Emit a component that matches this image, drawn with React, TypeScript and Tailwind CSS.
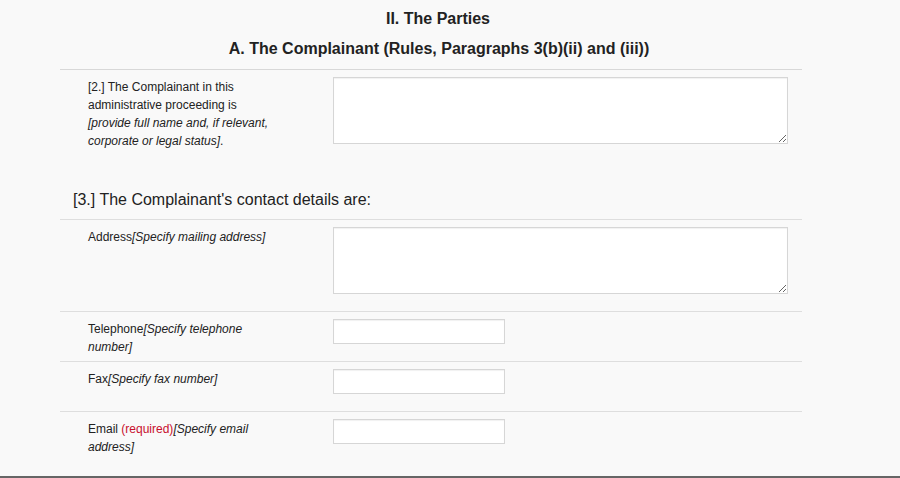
const labelCls = "w-[273px] shrink-0 pl-[28px] pr-[57px] pt-[1px] text-[12px] leading-[18px] text-[#222]";

function Row({ label, children, first }: { label: React.ReactNode; children: React.ReactNode; first?: boolean }) {
  return (
    <div className={`flex pt-[7px] ${first ? "" : "border-t border-[#dedede]"}`}>
      <div className={labelCls}>{label}</div>
      <div className="flex-1 pb-[17px]">{children}</div>
    </div>
  );
}

function Area() {
  return <textarea className="block w-[455px] h-[67px] bg-white border border-[#d6d6d6] shadow-[inset_0_1px_1px_rgba(0,0,0,0.06)]" />;
}

function Field() {
  return <input type="text" className="block w-[172px] h-[25px] bg-white border border-[#d6d6d6] shadow-[inset_0_1px_1px_rgba(0,0,0,0.06)]" />;
}

export default function App() {
  return (
    <div className="w-[900px] h-[478px] bg-[#f9f9f9] flex flex-col font-['Liberation_Sans',Arial,sans-serif] text-[#222] overflow-hidden">
      <div className="ml-[60px] w-[742px] flex-1">
        <h2 className="text-center font-bold text-[16px] leading-[20px] pt-[9px] pl-[14px]">II. The Parties</h2>
        <h3 className="text-center font-bold text-[16px] leading-[22px] mt-[9px] pl-[16px]">
          A. The Complainant (Rules, Paragraphs 3(b)(ii) and (iii))
        </h3>
        <div className="border-t border-[#d8d8d8] mt-[9px]">
          <Row first label={<>[2.] The Complainant in this administrative proceeding is <i>[provide full name and, if relevant, corporate or legal status]</i>.</>}>
            <Area />
          </Row>
        </div>
        <h3 className="text-[16px] leading-[22px] pl-[13px] mt-[28px] mb-[8px]">[3.] The Complainant's contact details are:</h3>
        <Row label={<>Address<i>[Specify mailing address]</i></>}>
          <Area />
        </Row>
        <Row label={<>Telephone<i>[Specify telephone number]</i></>}>
          <Field />
        </Row>
        <Row label={<>Fax<i>[Specify fax number]</i></>}>
          <Field />
        </Row>
        <Row label={<>Email <span className="text-[#c8102e]">(required)</span><i>[Specify email address]</i></>}>
          <Field />
        </Row>
      </div>
      <div className="h-[2px] bg-[#666]" />
    </div>
  );
}
